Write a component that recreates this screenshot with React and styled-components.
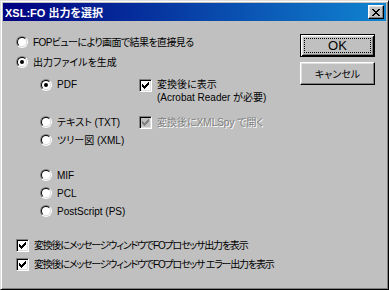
import React from 'react';
import styled, { createGlobalStyle } from 'styled-components';

const Global = createGlobalStyle`
  html, body { margin: 0; padding: 0; background: #c0c0c0; }
  body {
    font-family: "Liberation Sans", "Noto Sans CJK JP", sans-serif;
    font-size: 10px;
    color: #000;
    font-feature-settings: "palt";
  }
`;

const Window = styled.div`
  box-sizing: border-box;
  width: 389px;
  height: 290px;
  background: #c0c0c0;
  border: 1px solid;
  border-color: #dfdfdf #000 #000 #dfdfdf;
  box-shadow: inset 1px 1px #fff, inset -1px -1px #808080;
  padding: 2px;
  display: flex;
  flex-direction: column;
  overflow: hidden;
`;

const TitleBar = styled.div`
  height: 18px;
  flex: none;
  background: linear-gradient(to right, #000080, #1084d0);
  display: flex;
  align-items: center;
  justify-content: space-between;
  padding: 0 2px 0 2px;
`;

const TitleText = styled.span`
  color: #fff;
  font-weight: bold;
  font-size: 11px;
`;

const CloseBtn = styled.span`
  box-sizing: border-box;
  width: 16px;
  height: 14px;
  background: #c0c0c0;
  border: 1px solid;
  border-color: #fff #000 #000 #fff;
  box-shadow: inset -1px -1px #808080, inset 1px 1px #dfdfdf;
  display: flex;
  align-items: center;
  justify-content: center;
`;

const Body = styled.div`
  flex: 1;
  display: flex;
  padding: 0 11px 0 13px;
`;

const Left = styled.div`
  flex: 1;
  min-width: 0;
  display: flex;
  flex-direction: column;
`;

const Right = styled.div`
  width: 75px;
  flex: none;
  display: flex;
  flex-direction: column;
  padding-top: 13px;
  gap: 5px;
`;

const Row = styled.div`
  display: flex;
  align-items: ${p => (p.$top ? 'flex-start' : 'center')};
  height: ${p => p.$h || 16}px;
  margin-top: ${p => p.$mt || 0}px;
  padding-left: ${p => p.$indent || 0}px;
`;

const Item = styled.label`
  display: flex;
  align-items: ${p => (p.$top ? 'flex-start' : 'center')};
  gap: ${p => p.$gap || 5}px;
  width: ${p => (p.$w ? p.$w + 'px' : 'auto')};
  flex: none;
  white-space: nowrap;
`;

const Label = styled.span`
  line-height: 13px;
  letter-spacing: ${p => p.$ls || 0}px;
  color: ${p => (p.$disabled ? '#808080' : '#000')};
  text-shadow: ${p => (p.$disabled ? '1px 1px #fff' : 'none')};
`;

const RadioOuter = styled.span`
  box-sizing: border-box;
  width: 12px;
  height: 12px;
  flex: none;
  border-radius: 50%;
  border: 1px solid;
  border-color: #808080 #fff #fff #808080;
  display: flex;
`;

const RadioInner = styled.span`
  box-sizing: border-box;
  width: 10px;
  height: 10px;
  border-radius: 50%;
  border: 1px solid;
  border-color: #000 #dfdfdf #dfdfdf #000;
  background: #fff;
  display: flex;
  align-items: center;
  justify-content: center;
`;

const Dot = styled.span`
  width: 4px;
  height: 4px;
  border-radius: 50%;
  background: #000;
`;

const CheckBox = styled.span`
  box-sizing: border-box;
  width: 13px;
  height: 13px;
  flex: none;
  border: 1px solid;
  border-color: #808080 #fff #fff #808080;
  box-shadow: inset 1px 1px #000, inset -1px -1px #dfdfdf;
  background: ${p => (p.$disabled ? '#c0c0c0' : '#fff')};
  display: flex;
  align-items: center;
  justify-content: center;
  margin-top: ${p => p.$mt || 0}px;
`;

const Button = styled.button`
  box-sizing: border-box;
  width: 75px;
  height: 23px;
  position: relative;
  background: #c0c0c0;
  font: inherit;
  font-size: ${p => (p.$big ? 13 : 10)}px;
  color: #000;
  padding: 0;
  border: 1px solid;
  border-color: ${p => (p.$default ? '#000' : '#fff #000 #000 #fff')};
  box-shadow: ${p =>
    p.$default
      ? 'inset 1px 1px #fff, inset -1px -1px #000, inset 2px 2px #dfdfdf, inset -2px -2px #808080'
      : 'inset -1px -1px #808080, inset 1px 1px #dfdfdf'};
  &::after {
    content: ${p => (p.$default ? '""' : 'none')};
    position: absolute;
    inset: 3px;
    border: 1px dotted #000;
  }
`;

const checkRows = [
  [6],
  [5, 6],
  [0, 4, 5, 6],
  [0, 1, 3, 4, 5],
  [0, 1, 2, 3, 4],
  [1, 2, 3],
  [2],
];

function Check({ color = '#000' }) {
  return (
    <svg width="7" height="7" viewBox="0 0 7 7" shapeRendering="crispEdges">
      {checkRows.flatMap((cols, y) =>
        cols.map(x => <rect key={`${x}-${y}`} x={x} y={y} width="1" height="1" fill={color} />)
      )}
    </svg>
  );
}

function CloseGlyph() {
  const px = [
    [0, 1, 6, 7],
    [1, 2, 5, 6],
    [2, 3, 4, 5],
    [3, 4],
    [2, 3, 4, 5],
    [1, 2, 5, 6],
    [0, 1, 6, 7],
  ];
  return (
    <svg width="8" height="7" viewBox="0 0 8 7" shapeRendering="crispEdges">
      {px.flatMap((cols, y) =>
        cols.map(x => <rect key={`${x}-${y}`} x={x} y={y} width="1" height="1" fill="#000" />)
      )}
    </svg>
  );
}

function Radio({ checked, children, w, ls }) {
  return (
    <Item $w={w}>
      <RadioOuter>
        <RadioInner>{checked && <Dot />}</RadioInner>
      </RadioOuter>
      <Label $ls={ls}>{children}</Label>
    </Item>
  );
}

function CheckItem({ disabled, children, top, mt, ls }) {
  return (
    <Item $top={top} $gap={5}>
      <CheckBox $disabled={disabled} $mt={mt}>
        <Check color={disabled ? '#808080' : '#000'} />
      </CheckBox>
      <Label $disabled={disabled} $ls={ls}>{children}</Label>
    </Item>
  );
}

export default function App() {
  return (
    <>
      <Global />
      <Window>
        <TitleBar>
          <TitleText>XSL:FO 出力を選択</TitleText>
          <CloseBtn>
            <CloseGlyph />
          </CloseBtn>
        </TitleBar>
        <Body>
          <Left>
            <Row $mt={13}>
              <Radio ls={-0.6}>FOPビューにより画面で結果を直接見る</Radio>
            </Row>
            <Row $mt={4}>
              <Radio checked>出力ファイルを生成</Radio>
            </Row>
            <Row $mt={8} $h={28} $indent={24} $top>
              <Radio checked w={99}>PDF</Radio>
              <CheckItem top mt={1}>
                変換後に表示
                <br />
                (Acrobat Reader が必要)
              </CheckItem>
            </Row>
            <Row $mt={8} $indent={24}>
              <Radio w={99}>テキスト (TXT)</Radio>
              <CheckItem disabled>変換後にXMLSpy で開く</CheckItem>
            </Row>
            <Row $mt={2} $indent={24}>
              <Radio>ツリー図 (XML)</Radio>
            </Row>
            <Row $mt={19} $indent={24}>
              <Radio>MIF</Radio>
            </Row>
            <Row $mt={2} $indent={24}>
              <Radio>PCL</Radio>
            </Row>
            <Row $mt={2} $indent={24}>
              <Radio>PostScript (PS)</Radio>
            </Row>
            <Row $mt={18}>
              <CheckItem ls={-1.2}>変換後にメッセージウィンドウでFOプロセッサ出力を表示</CheckItem>
            </Row>
            <Row $mt={3}>
              <CheckItem ls={-1.2}>変換後にメッセージウィンドウでFOプロセッサ エラー出力を表示</CheckItem>
            </Row>
          </Left>
          <Right>
            <Button $default $big>OK</Button>
            <Button>キャンセル</Button>
          </Right>
        </Body>
      </Window>
    </>
  );
}
